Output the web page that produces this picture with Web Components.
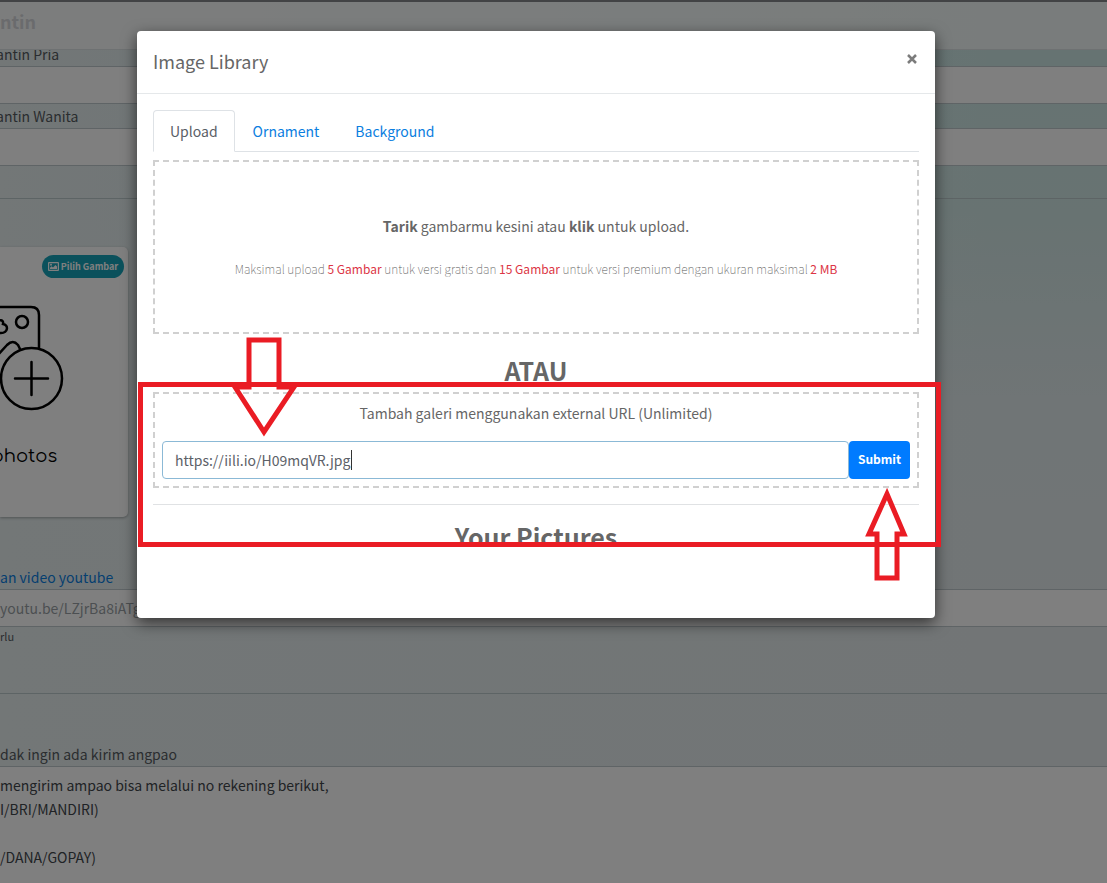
<!DOCTYPE html>
<html lang="id">
<head>
<meta charset="utf-8">
<title>Image Library</title>
<style>
html, body { margin: 0; min-height: 100%; }
body { overflow: hidden; font: 14px/24px "Noto Sans CJK SC", "Noto Sans CJK JP", "Open Sans", sans-serif; color: #666; }
</style>
</head>
<body>
<app-shell>
  <invitation-form></invitation-form>
  <library-dialog slot="overlay" heading="Image Library">
    <library-tabs></library-tabs>
    <upload-zone></upload-zone>
    <url-form></url-form>
    <mark-notes slot="notes"></mark-notes>
  </library-dialog>
</app-shell>
<script>
class Base extends HTMLElement {
  constructor() {
    super();
    this.attachShadow({ mode: 'open' }).innerHTML =
      '<style>:host,*{box-sizing:border-box}input,button,textarea{font:inherit;color:inherit}a{color:#0b7ee0;text-decoration:none}</style>' + this.view();
  }
}

customElements.define('app-shell', class extends Base {
  view() { return `<style>
    :host { display: block; position: relative; min-height: 100vh; }
    .veil { position: absolute; inset: 0; background: rgba(0,0,0,.5); padding: 31px 172px 0 137px; }
  </style><slot></slot><div class="veil"><slot name="overlay"></slot></div>`; }
});

customElements.define('photo-card', class extends Base {
  view() { return `<style>
    :host { display: flex; flex-direction: column; width: 128px; height: 270px; background: #fff; border-radius: 0 5px 5px 0; box-shadow: 0 1px 3px rgba(0,0,0,.3); overflow: hidden; }
    button { align-self: flex-end; display: flex; align-items: center; justify-content: center; gap: 2px; width: 82px; height: 23px; margin: 8px 4px 0 0; padding: 0; border: 0; border-radius: 12px; background: #17a2b8; color: #fff; font-size: 9px; line-height: 15px; font-weight: 700; white-space: nowrap; }
    .art { margin-top: 25px; }
    svg { display: block; }
    p { margin: 33px 0 0 -9px; font: 18px/24px Comfortaa, Quicksand, Lato, sans-serif; color: #000; }
  </style>
  <button type="button"><svg width="11" height="9" viewBox="0 0 11 9"><path fill="#fff" fill-rule="evenodd" d="M1 0h9a1 1 0 0 1 1 1v7a1 1 0 0 1-1 1H1a1 1 0 0 1-1-1V1a1 1 0 0 1 1-1zm.2 1.2v6.600h8.600V1.200zM2 7V5.700l1.500-1.500L5 5.500l2.500-2.600L9 4.500V7zM3 1.800a1 1 0 1 1 0 2a1 1 0 0 1 0-2z"/></svg>Pilih Gambar</button>
  <svg class="art" width="70" height="108" viewBox="0 0 70 108" fill="none" stroke="#000" stroke-width="2.500" stroke-linecap="round">
    <path d="M-4 4H31Q39 4 39 12V45M-4 21C-1 15 4 17 3 21C9 22 8 30 1 30H-4M-4 54L7 42Q13 36 18 42L20 46"/>
    <circle cx="22" cy="19" r="6"/><circle cx="31.500" cy="75.500" r="30.500"/><path d="M15 75.500H48M31.500 59V92"/>
  </svg><p>photos</p>`; }
});

customElements.define('invitation-form', class extends Base {
  view() { return `<style>
    :host { display: flex; flex-direction: column; height: 100vh; overflow: hidden; color: #555b60; background: linear-gradient(90deg, #e6eeef 0, rgba(230,238,239,0) 90%), linear-gradient(#cbe7e5 0, #d0e6e4 24%, #e0eaec 45%, #e4ebec 70%, #e4eaed 100%); }
    header { height: 50px; flex: none; border-top: 2px solid #85878a; border-bottom: 1px solid #dde3e4; background: rgba(255,255,255,.76); }
    h2 { margin: 6px 0 0; font-size: 18px; line-height: 27px; font-weight: 700; color: #d5d6da; }
    label, .link { display: block; white-space: nowrap; flex: none; }
    .clip { height: 16px; display: flex; align-items: flex-end; overflow: hidden; }
    .tag { height: 24px; }
    .clip, .tag { text-indent: -4px; }
    input, textarea { display: block; width: 100%; height: 38px; flex: none; margin: 0; padding: 0; background: #fff; border: solid #bfc9cd; border-width: 1px 0; border-radius: 0; outline: 0; }
    input::placeholder { color: #999fa4; opacity: 1; }
    .rule { border-top: 1px solid #bac8cb; flex: none; }
    .first { margin-top: 32px; }
    photo-card { margin-top: 48px; flex: none; }
    .link { margin-top: 48px; }
    small { font-size: 11px; line-height: 18px; flex: none; }
    .second { margin-top: 48px; }
    .gift { margin-top: 48px; height: 24px; }
    textarea { flex: 1; padding: 6px 0; resize: none; overflow: hidden; color: #41464b; border-bottom: 0; }
  </style>
  <header><h2>ntin</h2></header>
  <label class="clip" for="pria">antin Pria</label><input id="pria">
  <label class="tag" for="wanita">antin Wanita</label><input id="wanita">
  <div class="rule first"></div>
  <photo-card></photo-card>
  <div class="link"><a href="#video">an video youtube</a></div>
  <input class="video" id="video" aria-label="Video youtube" placeholder="youtu.be/LZjrBa8iATg">
  <small>rlu</small>
  <div class="rule second"></div>
  <label class="gift" for="gift">dak ingin ada kirim angpao</label>
  <textarea id="gift">mengirim ampao bisa melalui no rekening berikut,
I/BRI/MANDIRI)

/DANA/GOPAY)</textarea>`; }
});

customElements.define('library-dialog', class extends Base {
  view() { return `<style>
    :host { display: block; position: relative; min-height: 587px; background: #fff; border-radius: 4px; box-shadow: 0 5px 15px rgba(0,0,0,.6); }
    header { display: flex; justify-content: space-between; align-items: flex-start; height: 63px; padding: 16px; border-bottom: 1px solid #e5e8ea; }
    h1 { margin: 0; font-size: 18px; line-height: 28px; font-weight: 400; }
    button { padding: 0; border: 0; background: none; width: 14px; height: 24px; }
    svg { display: block; margin: auto; }
    main { padding: 16px; }
  </style>
  <header><h1></h1><button type="button" aria-label="Close"><svg width="10" height="10" viewBox="0 0 10 10" stroke="#7c7c7c" stroke-width="2.500"><path d="M1 1L9 9M9 1L1 9"/></svg></button></header>
  <main><slot></slot></main><slot name="notes"></slot>`; }
  connectedCallback() { this.shadowRoot.querySelector('h1').textContent = this.getAttribute('heading'); }
});

customElements.define('library-tabs', class extends Base {
  view() { return `<style>
    :host { display: block; }
    nav { display: flex; height: 42px; border-bottom: 1px solid #dee2e6; }
    a { height: 42px; padding: 8px 16px; border: 1px solid transparent; border-radius: 4px 4px 0 0; }
    a + a { padding: 8px 17px; }
    .on { color: #5a6066; background: #fff; border-color: #dee2e6 #dee2e6 #fff; }
  </style><nav><a class="on" href="#upload">Upload</a><a href="#ornament">Ornament</a><a href="#background">Background</a></nav>`; }
});

customElements.define('upload-zone', class extends Base {
  view() { return `<style>
    :host { display: flex; flex-direction: column; align-items: center; height: 174px; margin-top: 8px; padding-top: 52px; border: 2px dashed #d0d0d0; text-align: center; }
    p { margin: 0 0 21px; }
    small { font-size: 12px; line-height: 20px; font-weight: 100; color: #555; }
    em { font-style: normal; font-weight: 400; color: #dc3545; }
  </style><p><b>Tarik</b> gambarmu kesini atau <b>klik</b> untuk upload.</p>
  <small>Maksimal upload <em>5 Gambar</em> untuk versi gratis dan <em>15 Gambar</em> untuk versi premium dengan ukuran maksimal <em>2 MB</em></small>`; }
});

customElements.define('url-form', class extends Base {
  view() { return `<style>
    :host { display: block; text-align: center; }
    h2 { margin: 18px 0 4px; font-size: 25px; line-height: 36px; font-weight: 700; }
    form { height: 96px; border: 2px dashed #d0d0d0; padding: 7px; }
    label { display: block; }
    .row { display: flex; margin-top: 16px; }
    input { flex: 1; min-width: 0; height: 38px; padding: 0 12px; border: 1px solid #8bb9d6; border-radius: 4px; background: #fff; outline: 0; color: #5c6168; }
    button { width: 61px; height: 38px; padding: 0 0 2px; border: 0; border-radius: 4px; background: #007bff; color: #fff; font-size: 12px; font-weight: 700; }
    hr { margin: 16px 0 0; border: 0; border-top: 1px solid #e0e2e4; }
    hr + h2 { margin-top: 13px; }
  </style><h2>ATAU</h2>
  <form><label for="url">Tambah galeri menggunakan external URL (Unlimited)</label>
  <div class="row"><input id="url" value="https://iili.io/H09mqVR.jpg"><button type="button">Submit</button></div></form>
  <hr><h2>Your Pictures</h2>`; }
});

customElements.define('mark-notes', class extends Base {
  view() { return `<style>
    :host { display: block; position: absolute; inset: 0; pointer-events: none; }
    .box { position: absolute; left: 1px; right: -6px; top: 351px; height: 165px; border: 5px solid #ea1c24; }
    svg { position: absolute; fill: none; stroke: #ea1c24; stroke-width: 5; }
    .down { left: 93px; top: 306px; }
    .up { right: 23px; top: 457px; }
    .caret { position: absolute; left: 214px; top: 419px; width: 1px; height: 20px; background: #333; }
  </style><div class="box"></div><i class="caret"></i>
  <svg class="down" width="68" height="100" viewBox="0 0 68 100"><path d="M19 3H49V50H64L34 95L5 50H19Z"/></svg>
  <svg class="up" width="50" height="94" viewBox="0 0 50 94"><path d="M25 6L42 46H35V90H15V46H7Z"/></svg>`; }
});
</script>
</body>
</html>
